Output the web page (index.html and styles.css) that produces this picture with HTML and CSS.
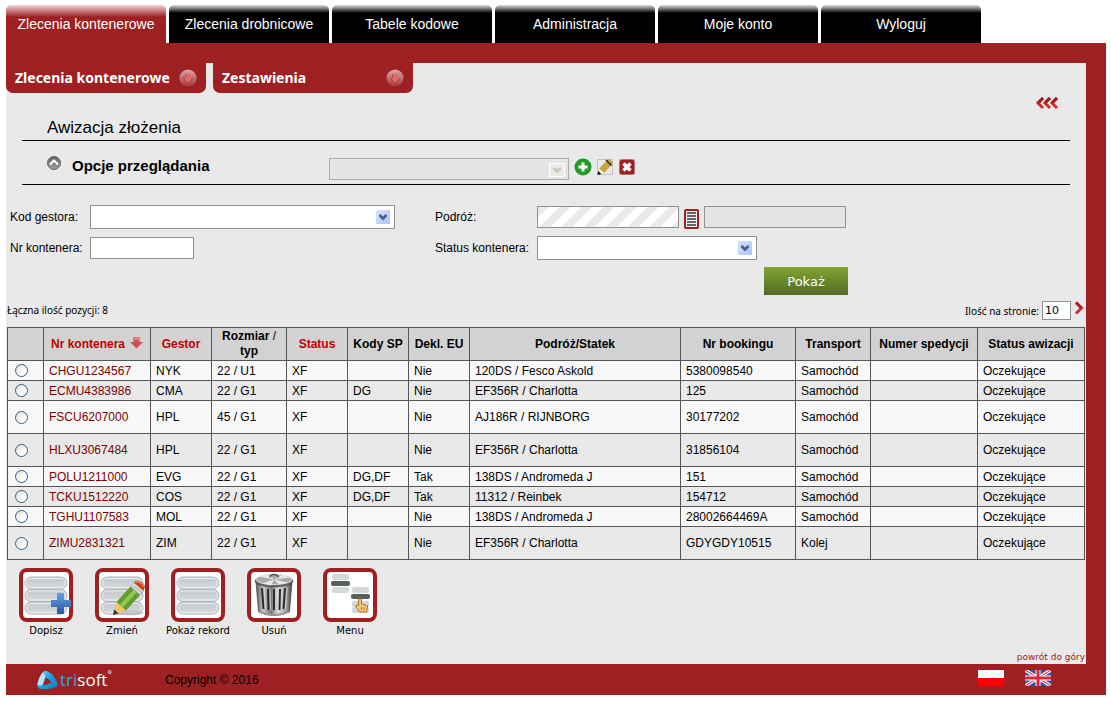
FILE: index.html
```html
<!DOCTYPE html>
<html lang="pl">
<head>
<meta charset="utf-8">
<title>Awizacja złożenia</title>
<link rel="stylesheet" href="styles.css">
</head>
<body id="top">
<svg class="defs" aria-hidden="true">
  <defs>
    <linearGradient id="blue" x1="0" y1="0" x2="1" y2="1"><stop offset="0" stop-color="#d6e4fe"/><stop offset="1" stop-color="#a9c3f8"/></linearGradient>
    <linearGradient id="pill" x1="0" y1="0" x2="0" y2="1"><stop offset="0" stop-color="#c3c8cc"/><stop offset="1" stop-color="#d6dadc"/></linearGradient>
    <linearGradient id="cross" x1="0" y1="0" x2="0" y2="1"><stop offset="0" stop-color="#6a9fdc"/><stop offset="1" stop-color="#2358a8"/></linearGradient>
    <linearGradient id="disc" x1="0" y1="0" x2="0" y2="1"><stop offset="0" stop-color="#dba9aa"/><stop offset="1" stop-color="#a83436"/></linearGradient>
    <linearGradient id="grey" x1="0" y1="0" x2="0" y2="1"><stop offset="0" stop-color="#606060"/><stop offset="1" stop-color="#a2a2a2"/></linearGradient>
    <linearGradient id="steel" x1="0" y1="0" x2="1" y2="0"><stop offset="0" stop-color="#555"/><stop offset=".2" stop-color="#c8c8c8"/><stop offset=".42" stop-color="#777"/><stop offset=".62" stop-color="#e0e0e0"/><stop offset=".85" stop-color="#999"/><stop offset="1" stop-color="#3c3c3c"/></linearGradient>
    <linearGradient id="logo" x1="0" y1="0" x2="1" y2="1"><stop offset="0" stop-color="#7fd0f3"/><stop offset=".5" stop-color="#1aa0de"/><stop offset="1" stop-color="#0878bd"/></linearGradient>
    <g id="drop"><rect width="14" height="14" rx="1" fill="url(#blue)"/><path d="M3 4.500h2l2 2 2-2h2v2l-4 4-4-4z" fill="#4a6184"/></g>
    <g id="menuarrow"><circle cx="9" cy="9" r="8.600" fill="url(#disc)"/><path d="M6.500 5h5v4h2.500l-5 5-5-5h2.500z" fill="#e0696c"/><path d="M6.500 5v4H4l5 5 5-5" fill="none" stroke="#b2393c" stroke-width=".7"/></g>
    <g id="records" fill="url(#pill)" stroke="#b4babe"><rect x="1" y="5" width="42" height="12" rx="6"/><rect x="1" y="17.500" width="42" height="12" rx="6"/><rect x="1" y="30" width="42" height="12" rx="6"/><g fill="none" stroke="#edf0f1"><rect x="2.500" y="6.500" width="39" height="9" rx="4.500"/><rect x="2.500" y="19" width="39" height="9" rx="4.500"/><rect x="2.500" y="31.500" width="39" height="9" rx="4.500"/></g></g>
  </defs>
</svg>
<nav class="tabs">
  <a class="tab tab-active" href="#">Zlecenia kontenerowe</a>
  <a class="tab" href="#">Zlecenia drobnicowe</a>
  <a class="tab" href="#">Tabele kodowe</a>
  <a class="tab" href="#">Administracja</a>
  <a class="tab" href="#">Moje konto</a>
  <a class="tab" href="#">Wyloguj</a>
</nav>
<div class="frame">
  <main class="panel">
    <nav class="submenu">
      <a class="subitem" href="#">Zlecenia kontenerowe<svg width="18" height="18"><use href="#menuarrow"/></svg></a>
      <a class="subitem" href="#">Zestawienia<svg width="18" height="18"><use href="#menuarrow"/></svg></a>
    </nav>
    <div class="hide-row">
      <button class="plain" type="button" aria-label="Zwiń">
        <svg width="22" height="12" viewBox="0 0 22 12" fill="none" stroke-width="3"><path d="M7 1 2 6l5 5M14 1 9 6l5 5M21 1l-5 5 5 5" stroke="#d32b2e"/><path d="M7 1 2 6M14 1 9 6M21 1l-5 5" stroke="#a02022"/></svg>
      </button>
    </div>
    <h1 class="title">Awizacja złożenia</h1>
    <section class="options">
      <button class="plain" type="button" aria-label="Zwiń opcje">
        <svg width="14" height="14" viewBox="0 0 14 14"><circle cx="7" cy="7" r="6.500" fill="url(#grey)" stroke="#626262"/><path d="m3 8.500 4-4 4 4" fill="none" stroke="#fff" stroke-width="2"/></svg>
      </button>
      <h2 class="options-title">Opcje przeglądania</h2>
      <div class="select-wrap select-off">
        <select class="field" disabled aria-label="Opcje przeglądania"><option></option></select>
        <svg class="drop" width="16" height="14" viewBox="0 0 16 14"><rect x=".5" y=".5" width="15" height="13" fill="#ecebe4" stroke="#fff"/><path d="M4 4.500h2l2 2 2-2h2v2l-4 4-4-4z" fill="#c9c8c0"/></svg>
      </div>
      <div class="option-icons">
        <button class="plain" type="button" aria-label="Dodaj"><svg width="18" height="18"><circle cx="9" cy="9" r="8.500" fill="#1f9c22"/><path d="M9 4.500v9M4.500 9h9" stroke="#fff" stroke-width="3"/></svg></button>
        <button class="plain" type="button" aria-label="Edytuj"><svg width="18" height="18"><path d="M1.500 1.500h15v15h-15z" fill="#e9e9e9" stroke="#c2c2c2"/><path d="M3 10.500 12 1.500l2-.5 3 3.500-.5 1.500L8 15z" fill="#c9a53b"/><path d="m3 10.500 5 4.500-3.500 1-2-2z" fill="#fff"/><path d="m1.500 17 .7-4 3.300 3z" fill="#111"/><path d="m10 2 5.500 5.500" stroke="#222" stroke-width="1.500"/></svg></button>
        <button class="plain" type="button" aria-label="Usuń opcje"><svg width="18" height="18"><path d="M1.500 1.500h15v15h-15z" fill="none" stroke="#c2c2c2"/><rect x="1.500" y="1.500" width="15" height="15" rx="2.500" fill="#a02022"/><path d="m5.500 5.500 7 7m0-7-7 7" stroke="#fff" stroke-width="3.500"/></svg></button>
      </div>
    </section>
    <form class="filters">
      <label for="gestor">Kod gestora:</label>
      <div class="select-wrap select-wide"><select class="field" id="gestor"><option></option></select><svg class="drop" width="14" height="14"><use href="#drop"/></svg></div>
      <label for="podroz">Podróż:</label>
      <div class="voyage">
        <input class="field striped" id="podroz" type="text">
        <button class="plain" type="button" aria-label="Lista podróży"><svg width="15" height="20"><rect x="1" y="1" width="13" height="18" rx="1" fill="#f2f2f2" stroke="#a02022" stroke-width="2"/><path d="M3 4h9M3 7h9M3 10h9M3 13h9M3 16h9" stroke="#666" stroke-width="2"/></svg></button>
        <input class="field field-off" type="text" disabled aria-label="Statek">
      </div>
      <label for="kontener">Nr kontenera:</label>
      <input class="field short" id="kontener" type="text">
      <label for="status">Status kontenera:</label>
      <div class="select-wrap select-mid"><select class="field" id="status"><option></option></select><svg class="drop" width="14" height="14"><use href="#drop"/></svg></div>
      <button class="show" type="submit">Pokaż</button>
    </form>
    <div class="summary">
      <span>Łączna ilość pozycji: 8</span>
      <div class="paging">
        <label for="perpage">Ilość na stronie:</label>
        <input class="field count" id="perpage" type="text" value="10">
        <button class="plain" type="button" aria-label="Następna strona"><svg width="11" height="16" fill="none" stroke-width="3"><path d="m2 1.500 5.500 5.500L2 12.500" stroke="#cf2c30"/><path d="m2 1.500 5.500 5.500" stroke="#b02225"/></svg></button>
      </div>
    </div>
    <table class="grid">
      <colgroup><col class="w36"><col class="w107"><col class="w61"><col class="w75"><col class="w61"><col class="w61"><col class="w61"><col><col class="w115"><col class="w75"><col class="w107"><col class="w107"></colgroup>
      <thead>
        <tr><th></th><th><span class="sorted"><a class="sort" href="#">Nr kontenera</a><svg width="13" height="17"><path d="M3.500 1h6v5H13l-6.500 6.500L0 6h3.500z" fill="#cc5054"/><path d="M3.500 1h6v3h-6z" fill="#db8183"/></svg></span></th><th><a class="sort" href="#">Gestor</a></th><th>Rozmiar <span class="thin">/</span> typ</th><th><a class="sort" href="#">Status</a></th><th>Kody SP</th><th>Dekl. EU</th><th>Podróż/Statek</th><th>Nr bookingu</th><th>Transport</th><th>Numer spedycji</th><th>Status awizacji</th></tr>
      </thead>
      <tbody>
        <tr><td><input class="pick" type="radio" name="row" aria-label="CHGU1234567"></td><td><a class="code" href="#">CHGU1234567</a></td><td>NYK</td><td>22 / U1</td><td>XF</td><td></td><td>Nie</td><td>120DS / Fesco Askold</td><td>5380098540</td><td>Samochód</td><td></td><td>Oczekujące</td></tr>
        <tr><td><input class="pick" type="radio" name="row" aria-label="ECMU4383986"></td><td><a class="code" href="#">ECMU4383986</a></td><td>CMA</td><td>22 / G1</td><td>XF</td><td>DG</td><td>Nie</td><td>EF356R / Charlotta</td><td>125</td><td>Samochód</td><td></td><td>Oczekujące</td></tr>
        <tr class="tall"><td><input class="pick" type="radio" name="row" aria-label="FSCU6207000"></td><td><a class="code" href="#">FSCU6207000</a></td><td>HPL</td><td>45 / G1</td><td>XF</td><td></td><td>Nie</td><td>AJ186R / RIJNBORG</td><td>30177202</td><td>Samochód</td><td></td><td>Oczekujące</td></tr>
        <tr class="tall"><td><input class="pick" type="radio" name="row" aria-label="HLXU3067484"></td><td><a class="code" href="#">HLXU3067484</a></td><td>HPL</td><td>22 / G1</td><td>XF</td><td></td><td>Nie</td><td>EF356R / Charlotta</td><td>31856104</td><td>Samochód</td><td></td><td>Oczekujące</td></tr>
        <tr><td><input class="pick" type="radio" name="row" aria-label="POLU1211000"></td><td><a class="code" href="#">POLU1211000</a></td><td>EVG</td><td>22 / G1</td><td>XF</td><td>DG,DF</td><td>Tak</td><td>138DS / Andromeda J</td><td>151</td><td>Samochód</td><td></td><td>Oczekujące</td></tr>
        <tr><td><input class="pick" type="radio" name="row" aria-label="TCKU1512220"></td><td><a class="code" href="#">TCKU1512220</a></td><td>COS</td><td>22 / G1</td><td>XF</td><td>DG,DF</td><td>Tak</td><td>11312 / Reinbek</td><td>154712</td><td>Samochód</td><td></td><td>Oczekujące</td></tr>
        <tr><td><input class="pick" type="radio" name="row" aria-label="TGHU1107583"></td><td><a class="code" href="#">TGHU1107583</a></td><td>MOL</td><td>22 / G1</td><td>XF</td><td></td><td>Nie</td><td>138DS / Andromeda J</td><td>28002664469A</td><td>Samochód</td><td></td><td>Oczekujące</td></tr>
        <tr class="tall"><td><input class="pick" type="radio" name="row" aria-label="ZIMU2831321"></td><td><a class="code" href="#">ZIMU2831321</a></td><td>ZIM</td><td>22 / G1</td><td>XF</td><td></td><td>Nie</td><td>EF356R / Charlotta</td><td>GDYGDY10515</td><td>Kolej</td><td></td><td>Oczekujące</td></tr>
      </tbody>
    </table>
    <div class="toolbar">
      <button class="tool" type="button">
        <span class="tool-icon"><svg width="46" height="46"><use href="#records" x="1"/><path d="M34 21h7v7h7v7h-7v7h-7v-7h-6v-7h6z" fill="url(#cross)"/></svg></span>
        Dopisz
      </button>
      <button class="tool" type="button">
        <span class="tool-icon"><svg width="46" height="46"><use href="#records" x="1"/><ellipse cx="30" cy="41" rx="15" ry="2.500" fill="#777" opacity=".25"/><path d="M15 42 17.500 30 27 38.500z" fill="#f6c568"/><path d="m14 43 1.200-5.500 4.300 4z" fill="#333"/><path d="m17.500 30 14-15.500L41 23 27 38.500z" fill="#5f9e2c"/><path d="m20.700 33 14-15.500 3 2.700-14 15.500z" fill="#93c754"/><path d="m31.500 14.500 3.500-4 9.500 8.500-3.500 4z" fill="#d9d9d9" stroke="#999" stroke-width=".6"/><path d="m33 16 8 7m-6-9 8 7" stroke="#999" stroke-width=".8"/><path d="m35 10.500 1.500-1.500q7-1 9.500 5.500l-1.500 4.500z" fill="#c8491e"/><path d="m36.500 9.500q6 0 8.500 5" fill="none" stroke="#e58a5e" stroke-width="1.500"/></svg></span>
        Zmień
      </button>
      <button class="tool" type="button">
        <span class="tool-icon"><svg width="46" height="46"><use href="#records" x="1"/></svg></span>
        Pokaż rekord
      </button>
      <button class="tool" type="button">
        <span class="tool-icon"><svg width="46" height="46"><path d="m5 10 2.500 30q15.500 7 31 0L41 10z" fill="url(#steel)" stroke="#444" stroke-width=".7"/><path d="m11 16 1.500 21m4.500-20 .5 21m5.500-21v21m6-21-.5 21m5.500-22-1.500 21" fill="none" stroke="#2c2c2c" stroke-width="2"/><path d="m13 16 1.500 21m4.500-20 .5 21m5.500-21v21m6-21-.5 21m5.500-22-1.500 21" fill="none" stroke="#ddd" stroke-width=".8"/><path d="M7.500 39.500q15.500 7 31 0" fill="none" stroke="#999" stroke-width="1.500"/><ellipse cx="23" cy="9" rx="19" ry="6" fill="#686868" stroke="#444" stroke-width=".7"/><ellipse cx="23" cy="7.500" rx="18" ry="5" fill="#aaa" stroke="#ddd"/><path d="m23 7.500-15-3 8-2zm0 0 9-5 7 3zm0 0-12 4 9 2zm0 0 5 5 9-2z" fill="#e8e8e8"/><path d="M19 5.500q0-3 4-3t4 3" fill="none" stroke="#555" stroke-width="1.500"/></svg></span>
        Usuń
      </button>
      <button class="tool" type="button">
        <span class="tool-icon"><svg width="46" height="46"><g fill="#d5d8da"><rect x="5" y="2" width="17" height="6" rx="2"/><rect x="5" y="15" width="17" height="6" rx="2"/><rect x="25" y="15" width="17" height="6" rx="2"/><rect x="25" y="29" width="17" height="6" rx="2"/><rect x="25" y="35" width="17" height="6" rx="2"/></g><g fill="#5b5e5f"><rect x="4" y="9" width="19" height="5" rx="2"/><rect x="24" y="22" width="19" height="5" rx="2"/></g><path d="M31.500 27q1.500-1.500 3 0v5l4 1q2.500 0 2 2l-1 5h-7l-4-6q.5-2 3-.5z" fill="#f3c777" stroke="#a9752a"/><path d="M34.500 35v3m2.500-3v3" stroke="#a9752a" stroke-width=".8"/></svg></span>
        Menu
      </button>
    </div>
    <div class="back-row"><a class="back" href="#top">powrót do góry</a></div>
  </main>
  <footer class="footer">
    <a class="brand" href="#"><svg width="21" height="20" viewBox="0 0 21 20"><path d="M5.500 2.500Q8-.5 11 1.500q7 4 9.500 12 .5 3-3 4-7 2.500-14 1.500-4-.5-3-5 1.500-7 5-11.500z" fill="url(#logo)"/><path d="M5.500 2.500Q9 4 8 8l-2 6q-2 3-5 1-1-1-.5-2 1.500-6 5-10.500z" fill="#b5e4f8"/><path d="M8.500 7.500q4 2 6 5-4 2.500-8.500 2.500z" fill="#9e2022"/></svg><span><span class="brand-tri">tri</span>soft</span><sup class="reg">°</sup></a>
    <span class="copy">Copyright © 2016</span>
    <div class="flags">
      <a href="#" aria-label="Polski"><svg width="26" height="16"><path fill="#fff" d="M0 0h26v8H0z"/><path fill="#f00" d="M0 8h26v8H0z"/></svg></a>
      <a href="#" aria-label="English"><svg class="clip" width="26" height="16"><path fill="#34509c" d="M0 0h26v16H0z"/><path d="m0 0 26 16M26 0 0 16" stroke="#fff" stroke-width="3.500"/><path d="m0 0 26 16M26 0 0 16" stroke="#d8485c" stroke-width="1.200"/><path d="M13 0v16M0 8h26" stroke="#fff" stroke-width="5"/><path d="M13 0v16M0 8h26" stroke="#d8243c" stroke-width="3"/></svg></a>
    </div>
  </footer>
</div>
</body>
</html>
```
FILE: styles.css
```css
* { box-sizing: border-box; }
body {
  margin: 5px 5px 7px 6px;
  background: #fff;
  color: #000;
  font: 12px/14px "Liberation Sans", Arial, sans-serif;
}
svg { display: block; overflow: visible; }
a { text-decoration: none; }
.defs { position: absolute; width: 0; height: 0; }
.plain { padding: 0; border: 0; background: none; cursor: pointer; }

.tabs { display: flex; gap: 3px; }
.tab {
  width: 160px;
  height: 38px;
  border-radius: 5px 5px 0 0;
  background: linear-gradient(#ddd, #000 8px);
  color: #fff;
  font-size: 14px;
  line-height: 38px;
  text-align: center;
}
.tab-active { background: linear-gradient(#eed6d6, #9f2022 12px); }

.frame { background: #9e2022; padding-top: 20px; }
.panel { margin-right: 20px; background: #e9e9e9; }

.submenu { display: flex; gap: 7px; }
.subitem {
  display: flex;
  align-items: center;
  justify-content: space-between;
  width: 200px;
  height: 30px;
  padding: 0 9px;
  border-radius: 0 0 7px 7px;
  background: #9f2022;
  color: #fff;
  font: bold 14px/30px "Noto Sans", sans-serif;
}
.hide-row { display: flex; justify-content: flex-end; height: 24px; padding: 4px 28px 8px; }
.title {
  margin: 0 16px;
  padding: 1px 25px 2px;
  border-bottom: 1px solid #000;
  font-size: 17px;
  font-weight: normal;
  line-height: 20px;
}
.options {
  display: flex;
  align-items: flex-start;
  margin: 0 16px;
  padding: 15px 25px 4px;
  border-bottom: 1px solid #000;
}
.options-title {
  width: 257px;
  margin: 0 0 0 11px;
  font-size: 15px;
  line-height: 20px;
}
.option-icons { display: flex; gap: 4px; margin: 2px 0 0 5px; }

.field {
  display: block;
  width: 100%;
  height: 22px;
  margin: 0;
  padding: 0 2px;
  border: 1px solid #919191;
  border-radius: 0;
  background: #fff;
  color: #000;
  font: 11px "DejaVu Sans", sans-serif;
  appearance: none;
}
.select-wrap { position: relative; }
.select-wrap .field { height: 24px; }
.drop { position: absolute; top: 5px; right: 5px; pointer-events: none; }
.select-off { width: 240px; margin-top: 2px; }
.select-off .field { height: 22px; background: #e4e4e4; }
.select-off .drop { right: 4px; }
.select-wide { width: 305px; }
.select-mid { width: 220px; }
.short { width: 104px; }
.field-off { width: 142px; background: #e4e4e4; }
.striped {
  width: 142px;
  background: linear-gradient(135deg, #eaeaea 25%, #fff 25% 50%, #eaeaea 50% 75%, #fff 75%) 0 0 / 22px 22px;
}

.filters {
  display: grid;
  grid-template-columns: 80px 345px 102px 311px;
  grid-template-rows: 24px 24px 28px;
  row-gap: 7px;
  align-items: center;
  padding: 20px 4px 0;
}
.voyage { display: flex; align-items: center; gap: 5px; }
.voyage .plain { margin-top: 3px; }
.show {
  grid-column: 4;
  justify-self: end;
  width: 84px;
  height: 28px;
  padding: 0;
  border: 0;
  background: linear-gradient(#82a535, #526b22);
  color: #fff;
  font: 13px "DejaVu Sans", sans-serif;
}

.summary {
  display: flex;
  align-items: center;
  justify-content: space-between;
  padding: 5px 1px 7px;
  font: 10px/20px "Noto Sans", sans-serif;
}
.summary .field { height: 19px; }
.summary .plain { align-self: flex-start; }
.paging { display: flex; gap: 3px; height: 19px; }
.count { width: 29px; }

.grid {
  width: calc(100% - 2px);
  margin-left: 1px;
  border-collapse: collapse;
  table-layout: fixed;
  background: #f8f8f8;
}
.grid th, .grid td { border: 1px solid #555; }
.grid th { height: 33px; padding: 0 5px; background: #d2d2d2; line-height: 15px; }
.grid th:nth-child(n+10) { padding: 0; }
.sorted { display: flex; align-items: center; justify-content: center; gap: 5px; }
.grid td { height: 20px; padding: 0 5px; white-space: nowrap; }
.grid .tall td { height: 33px; }
.grid tr:nth-child(even) td { background: #e9e9e9; }
.w36 { width: 36px; }
.w61 { width: 61px; }
.w75 { width: 75px; }
.w107 { width: 107px; }
.w115 { width: 115px; }
.sort { color: #c00000; white-space: nowrap; }
.thin { font-weight: normal; }
.code { color: #800000; }
.pick {
  display: block;
  width: 13px;
  height: 13px;
  margin: 0 2px;
  border: 1px solid #2f6089;
  border-radius: 50%;
  background: linear-gradient(135deg, #dcdcd8, #fff 70%);
  appearance: none;
}

.toolbar { display: flex; padding: 8px 2px 0; }
.tool {
  display: flex;
  flex-direction: column;
  align-items: center;
  gap: 2px;
  width: 76px;
  padding: 0;
  border: 0;
  background: none;
  font: 10px/14px "DejaVu Sans", sans-serif;
}
.tool-icon { border: 4px solid #a02022; border-radius: 8px; background: #fff; }
.back-row { display: flex; justify-content: flex-end; padding: 13px 1px 0; }
.back { color: #9e2022; font: 9px/13px "DejaVu Sans", sans-serif; }

.footer { display: flex; align-items: center; height: 31px; padding: 0 55px 0 31px; }
.brand {
  display: flex;
  align-items: center;
  width: 128px;
  gap: 2px;
  color: #fff;
  font: 17px/24px "Open Sans", sans-serif;
}
.brand-tri { color: #2aa9e0; }
.reg { align-self: flex-start; margin-left: -2px; font-size: 10px; line-height: 12px; }
.flags { display: flex; gap: 21px; margin: 0 0 3px auto; }
.clip { overflow: hidden; }
```
